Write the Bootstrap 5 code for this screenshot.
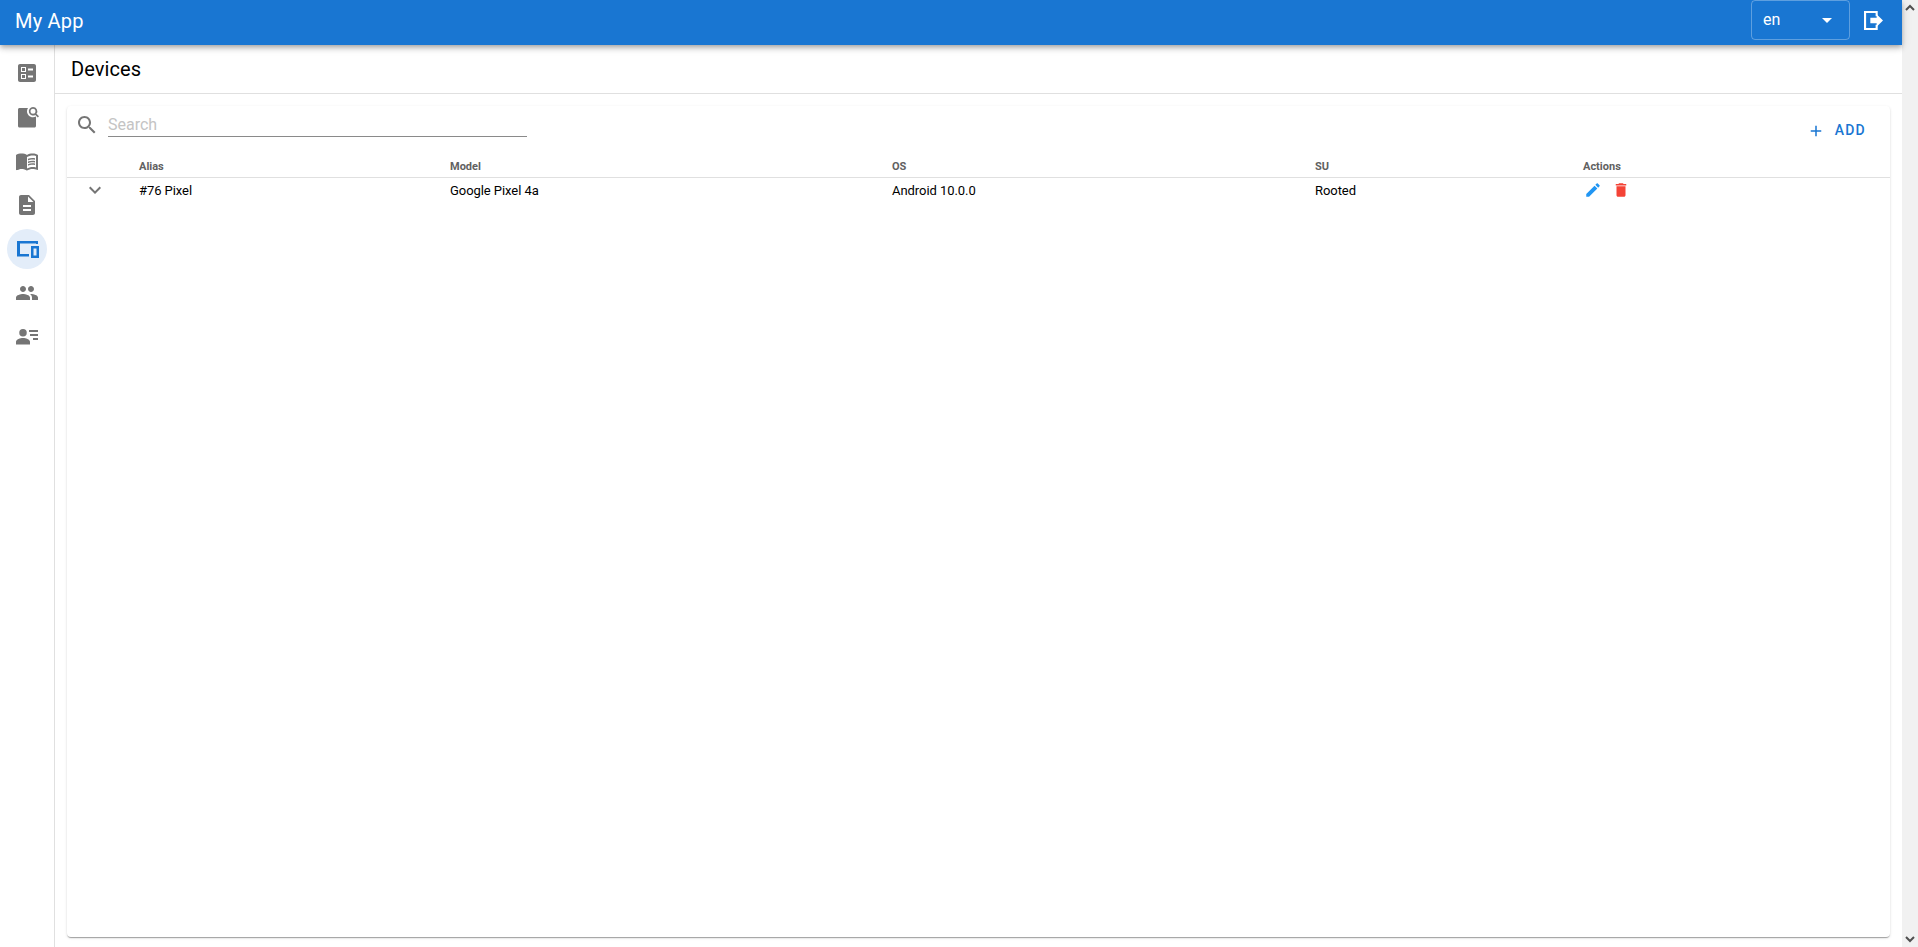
<!DOCTYPE html>
<html lang="en">
<head>
<meta charset="utf-8">
<title>Devices</title>
<link href="https://cdn.jsdelivr.net/npm/bootstrap@5.3.0/dist/css/bootstrap.min.css" rel="stylesheet">
<style>
html,body{height:100%;overflow:hidden}
body{font-family:Roboto,"Liberation Sans",sans-serif;color:#000;background:#fff}
.app-shell{height:947px}
.app-main{width:1902px;min-width:0}
.fake-scroll{width:16px;background:#f1f1f1}
.fake-scroll svg{width:16px;height:17px;display:block}
.app-bar{height:45px;background:#1976d2;padding:0 19px 0 15px;box-shadow:0 2px 4px -1px rgba(0,0,0,.2),0 4px 5px rgba(0,0,0,.14),0 1px 10px rgba(0,0,0,.12);position:relative;z-index:2;flex-wrap:nowrap}
.app-title{font-size:20px;font-weight:400;color:#fff;line-height:1;letter-spacing:.2px;margin-top:-3px}
.lang-box{width:99px;height:40px;margin-top:-5px;border:1px solid rgba(255,255,255,.3);border-radius:4px;padding:0 17px 0 11px;color:#fff;font-size:16px;margin-right:14px}
.lang-caret{width:0;height:0;border-left:5px solid transparent;border-right:5px solid transparent;border-top:5px solid #fff}
.logout-ic{width:19px;height:19px;display:block;margin-top:-4px}
.side-rail{width:55px;border-right:1px solid #e0e0e0;padding-top:8px;gap:4px;flex:none}
.rail-btn{width:40px;height:40px;margin-left:7px;border-radius:50%;padding:0;border:0;background:transparent;display:flex;align-items:center;justify-content:center}
.rail-btn svg{width:24px;height:24px;fill:#757575}
.rail-btn.is-on{background:#e3edf9}
.rail-btn.is-on svg{fill:#1976d2}
.page-head{height:49px;border-bottom:1px solid #e0e0e0;padding-left:16px;font-size:20px;letter-spacing:.1px;flex:none}
.page-body{padding:12px 12px 10px;min-height:0}
.dev-card{border:0;border-radius:4px;box-shadow:0 2px 1px -1px rgba(0,0,0,.2),0 1px 1px rgba(0,0,0,.14),0 1px 3px rgba(0,0,0,.12)}
.tool-row{height:49px;padding:6px 24px 0 9px;flex:none}
.search-ic{width:24px;height:24px;fill:#757575;margin-right:9px;margin-top:1px;margin-left:-1px}
.search-in{width:419px;height:25px;border:0;border-bottom:1px solid #8a8a8a;border-radius:0;padding:1px 0 0;font-size:16px;line-height:20px;box-shadow:none}
.search-in::placeholder{color:#c4c4c4;opacity:1}
.add-btn{color:#1976d2;font-size:14px;font-weight:500;letter-spacing:1.25px;padding:0;border:0;display:flex;align-items:center;gap:10px;margin-top:8px}
.add-btn svg{width:18px;height:18px;fill:#1976d2}
.dev-table{table-layout:fixed;width:100%;margin:0;font-size:13px;color:#000;letter-spacing:-.06px}
.dev-table th{font-size:11px;font-weight:700;color:#616161;height:22px;padding:2px 0 0;vertical-align:middle;border-bottom:1px solid #e0e0e0;line-height:1;letter-spacing:0}
.dev-table td{height:27px;padding:0;vertical-align:middle;border:0;line-height:1}
.w-a{width:72px}.w-b{width:311px}.w-c{width:442px}.w-d{width:423px}.w-e{width:268px}
.chev{width:24px;height:24px;fill:#757575;display:block;margin-left:16px;margin-top:-2px}
.act-ic{width:18px;height:18px;display:block;margin-top:-2px}
.act-pair{gap:10px;padding-left:1px}
</style>
</head>
<body>
<div class="app-shell d-flex">
  <div class="app-main d-flex flex-column">
    <nav class="navbar app-bar d-flex align-items-center justify-content-between">
      <span class="app-title">My App</span>
      <div class="d-flex align-items-center">
        <div class="lang-box d-flex align-items-center justify-content-between"><span>en</span><span class="lang-caret"></span></div>
        <svg class="logout-ic" viewBox="0 0 18 18"><path fill="none" stroke="#fff" stroke-width="2" d="M12 5V1H1v16h11v-4"/><path fill="#fff" d="M6 6.500h6V3l6 6-6 6v-3.500H6z"/></svg>
      </div>
    </nav>
    <div class="d-flex flex-grow-1" style="min-height:0">
      <aside class="side-rail d-flex flex-column">
        <button class="rail-btn" aria-label="Checks"><svg viewBox="0 0 24 24"><path d="M13 9.500h5v-2h-5v2zm0 7h5v-2h-5v2zm6 4.500H5c-1.100 0-2-.9-2-2V5c0-1.100.9-2 2-2h14c1.100 0 2 .9 2 2v14c0 1.100-.9 2-2 2zM6 11h5V6H6v5zm1-4h3v3H7V7zM6 18h5v-5H6v5zm1-4h3v3H7v-3z"/></svg></button>
        <button class="rail-btn" aria-label="Search pages"><svg viewBox="0 0 24 24"><path d="M3 4.500c0-.8.7-1.500 1.500-1.500H13c-.6 1-1 2.100-1 3.300 0 3.300 2.700 6 6 6 1.100 0 2.100-.3 3-.8V21c0 .8-.7 1.500-1.500 1.500H4.500C3.700 22.500 3 21.800 3 21z"/><path fill-rule="evenodd" d="M18 2a4.300 4.300 0 0 1 3.500 6.800L24 11.300 22.800 12.500l-2.500-2.500A4.300 4.300 0 1 1 18 2zm0 1.800a2.500 2.500 0 1 0 0 5 2.500 2.500 0 0 0 0-5z"/></svg></button>
        <button class="rail-btn" aria-label="Library"><svg viewBox="0 0 24 24"><path d="M21 5c-1.110-.35-2.330-.5-3.500-.5-1.950 0-4.050.4-5.500 1.500-1.450-1.100-3.550-1.500-5.500-1.500S2.450 4.900 1 6v14.650c0 .25.25.5.5.5.1 0 .15-.05.25-.05C3.100 20.450 5.050 20 6.500 20c1.950 0 4.050.4 5.500 1.500 1.350-.85 3.800-1.500 5.500-1.500 1.650 0 3.350.3 4.750 1.050.1.05.15.05.25.05.25 0 .5-.25.5-.5V6c-.6-.45-1.250-.75-2-1zm0 13.500c-1.100-.35-2.300-.5-3.500-.5-1.700 0-4.150.65-5.500 1.500V8c1.350-.85 3.800-1.500 5.500-1.500 1.200 0 2.400.15 3.500.5v11.500z"/><path d="M17.500 10.500c.88 0 1.730.09 2.500.26V9.240c-.79-.15-1.640-.24-2.500-.24-1.700 0-3.240.29-4.500.83v1.660c1.130-.64 2.700-.99 4.500-.99zM13 12.490v1.660c1.130-.64 2.700-.99 4.500-.99.88 0 1.730.09 2.500.26V11.900c-.79-.15-1.640-.24-2.500-.24-1.700 0-3.240.3-4.500.83zM17.500 14.330c-1.700 0-3.240.29-4.500.83v1.660c1.130-.64 2.700-.99 4.500-.99.88 0 1.730.09 2.500.26v-1.520c-.79-.16-1.640-.24-2.500-.24z"/><path d="M1 6h11v15.500c-1.450-1.100-3.550-1.500-5.500-1.500-1.450 0-3.400.45-4.750 1.100L1 21z"/></svg></button>
        <button class="rail-btn" aria-label="Documents"><svg viewBox="0 0 24 24"><path d="M14 2H6c-1.100 0-1.990.9-1.990 2L4 20c0 1.100.89 2 1.990 2H18c1.100 0 2-.9 2-2V8l-6-6zm2 16H8v-2h8v2zm0-4H8v-2h8v2zm-3-5V3.500L18.500 9H13z"/></svg></button>
        <button class="rail-btn is-on" aria-label="Devices"><svg viewBox="0 0 24 24"><path d="M2 4h21v3h-2V6.500H5v10.500h9v2.500H2z"/><path fill-rule="evenodd" d="M16 9h8v12h-8zm2.500 2.500v7h3v-7z"/></svg></button>
        <button class="rail-btn" aria-label="Users"><svg viewBox="0 0 24 24"><path d="M16 11c1.660 0 2.990-1.340 2.990-3S17.660 5 16 5c-1.660 0-3 1.340-3 3s1.340 3 3 3zm-8 0c1.660 0 2.990-1.340 2.990-3S9.660 5 8 5C6.340 5 5 6.340 5 8s1.340 3 3 3zm0 2c-2.330 0-7 1.170-7 3.500V19h14v-2.500c0-2.330-4.670-3.500-7-3.500zm8 0c-.29 0-.62.02-.97.05 1.160.84 1.970 1.970 1.970 3.450V19h6v-2.500c0-2.330-4.670-3.500-7-3.500z"/></svg></button>
        <button class="rail-btn" aria-label="Roles"><svg viewBox="0 0 24 24"><path d="M8 11.500a3.750 3.750 0 1 0 0-7.500 3.750 3.750 0 0 0 0 7.500zM8 13c-2.700 0-7 1.300-7 3.800V19.500h14v-2.700C15 14.300 10.700 13 8 13zM14 5h9v2h-9zm1 4h8v2h-8zm3 4h5v2h-5z"/></svg></button>
      </aside>
      <main class="flex-grow-1 d-flex flex-column" style="min-width:0">
        <div class="page-head d-flex align-items-center">Devices</div>
        <div class="page-body flex-grow-1 d-flex flex-column">
          <div class="card dev-card flex-grow-1">
            <div class="tool-row d-flex align-items-start justify-content-between">
              <div class="d-flex align-items-start">
                <svg class="search-ic" viewBox="0 0 24 24"><path d="M15.500 14h-.79l-.28-.27C15.410 12.590 16 11.110 16 9.500 16 5.910 13.090 3 9.500 3S3 5.910 3 9.500 5.910 16 9.500 16c1.610 0 3.090-.59 4.230-1.570l.27.28v.79l5 4.990L20.490 19l-4.990-5zm-6 0C7.010 14 5 11.990 5 9.500S7.010 5 9.500 5 14 7.010 14 9.500 11.990 14 9.500 14z"/></svg>
                <input class="form-control search-in" type="text" placeholder="Search">
              </div>
              <button class="btn add-btn"><svg viewBox="0 0 24 24"><path d="M19 13h-6v6h-2v-6H5v-2h6V5h2v6h6v2z"/></svg>ADD</button>
            </div>
            <table class="table dev-table">
              <colgroup><col class="w-a"><col class="w-b"><col class="w-c"><col class="w-d"><col class="w-e"><col></colgroup>
              <thead><tr><th></th><th>Alias</th><th>Model</th><th>OS</th><th>SU</th><th>Actions</th></tr></thead>
              <tbody><tr>
                <td><svg class="chev" viewBox="0 0 24 24"><path d="M16.590 8.590 12 13.170 7.410 8.590 6 10l6 6 6-6z"/></svg></td>
                <td>#76 Pixel</td><td>Google Pixel 4a</td><td>Android 10.0.0</td><td>Rooted</td>
                <td><div class="d-flex act-pair">
                  <svg class="act-ic" viewBox="0 0 24 24" fill="#2196f3"><path d="M3 17.250V21h3.750L17.810 9.940l-3.750-3.750L3 17.250zM20.710 7.040c.39-.39.39-1.020 0-1.410l-2.340-2.340c-.39-.39-1.020-.39-1.410 0l-1.830 1.830 3.750 3.750 1.830-1.830z"/></svg>
                  <svg class="act-ic" viewBox="0 0 24 24" fill="#f44336"><path d="M6 19c0 1.100.9 2 2 2h8c1.100 0 2-.9 2-2V7H6v12zM19 4h-3.500l-1-1h-5l-1 1H5v2h14V4z"/></svg>
                </div></td>
              </tr></tbody>
            </table>
          </div>
        </div>
      </main>
    </div>
  </div>
  <div class="fake-scroll d-flex flex-column justify-content-between flex-none">
    <svg viewBox="0 0 16 17"><path fill="none" stroke="#505050" stroke-width="2" d="M4 10l4-4 4 4"/></svg>
    <svg viewBox="0 0 16 17"><path fill="none" stroke="#505050" stroke-width="2" d="M4 7l4 4 4-4"/></svg>
  </div>
</div>
<script src="https://cdn.jsdelivr.net/npm/bootstrap@5.3.0/dist/js/bootstrap.bundle.min.js"></script>
</body>
</html>
